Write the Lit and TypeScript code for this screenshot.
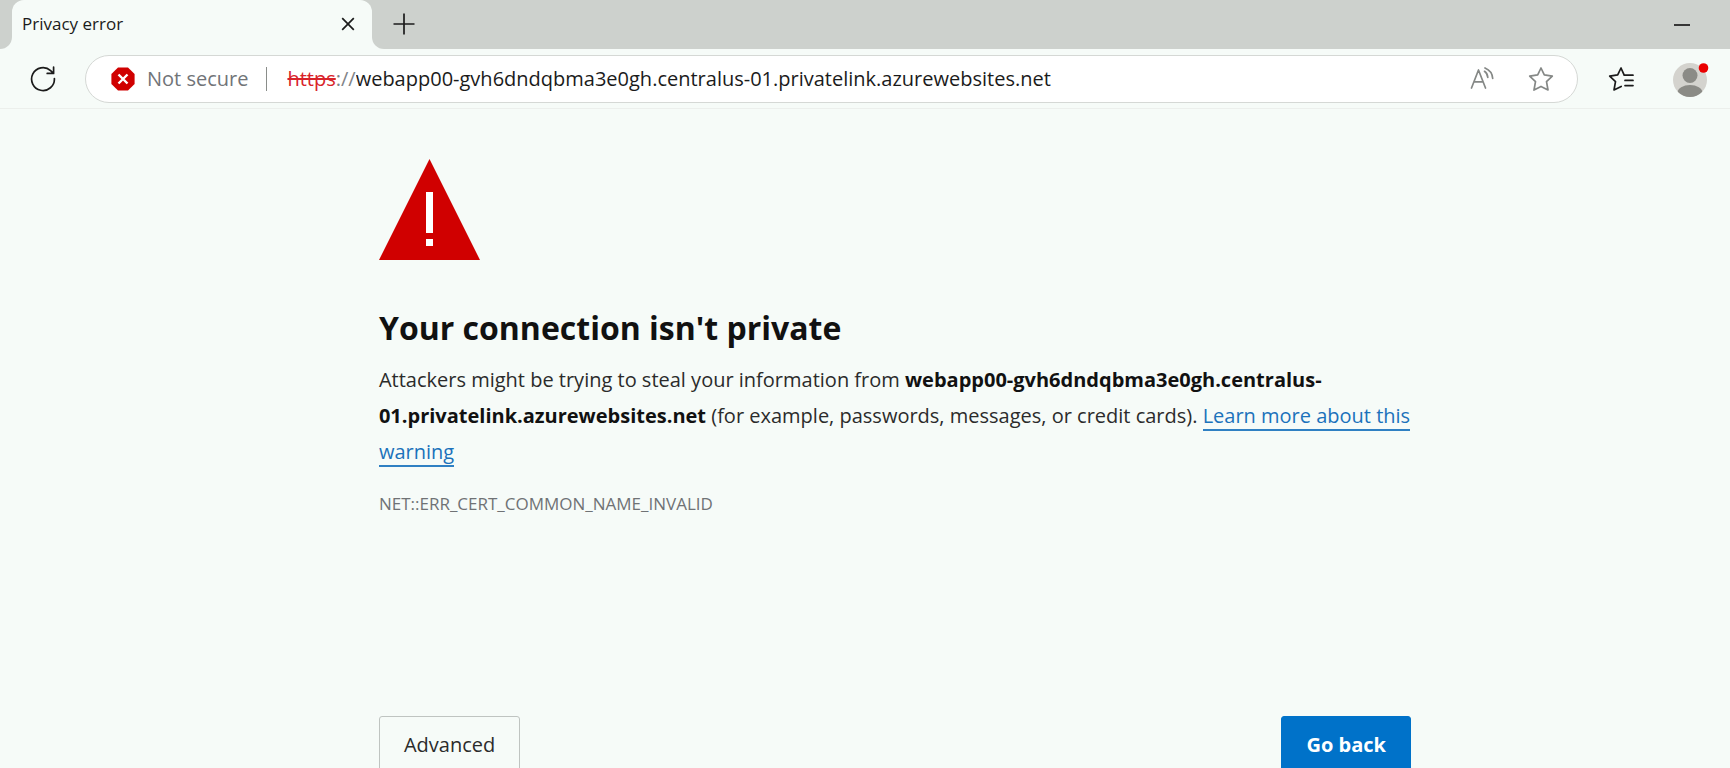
import { LitElement, html, css } from "lit";
import { customElement } from "lit/decorators.js";

const HOST = "webapp00-gvh6dndqbma3e0gh.centralus-01.privatelink.azurewebsites.net";

@customElement("browser-tabs")
class BrowserTabs extends LitElement {
  static styles = css`
    :host {
      display: flex;
      align-items: center;
      height: 49px;
      background: #cdd1cd;
      color: #1b1b1b;
    }
    .edge {
      width: 12px;
      align-self: stretch;
      background: #f6fbf8;
    }
    .edge span {
      display: block;
      height: 100%;
      background: #cdd1cd;
    }
    .edge.left span {
      border-bottom-right-radius: 12px;
    }
    .edge.right span {
      border-bottom-left-radius: 12px;
    }
    .tab {
      display: flex;
      align-items: center;
      justify-content: space-between;
      align-self: stretch;
      width: 360px;
      box-sizing: border-box;
      padding: 0 12px 2px 10px;
      border-radius: 12px 12px 0 0;
      background: #f6fbf8;
      font-size: 17px;
      line-height: 24px;
    }
    button {
      display: grid;
      place-items: center;
      width: 24px;
      height: 24px;
      padding: 0;
      border: 0;
      background: none;
      color: inherit;
    }
    .add {
      width: 40px;
      height: 40px;
      padding-bottom: 2px;
    }
    .minimize {
      margin-left: auto;
      margin-right: 36px;
    }
    svg {
      display: block;
      fill: none;
      stroke: currentColor;
      stroke-width: 1.7;
    }
  `;

  render() {
    return html`
      <div class="edge left"><span></span></div>
      <div class="tab">
        <span>Privacy error</span>
        <button aria-label="Close tab">
          <svg width="14" height="14" viewBox="0 0 14 14"><path d="M1.2 1.2l11.6 11.6M12.8 1.2l-11.6 11.6" /></svg>
        </button>
      </div>
      <div class="edge right"><span></span></div>
      <button class="add" aria-label="New tab">
        <svg width="22" height="22" viewBox="0 0 22 22"><path d="M11 .5v21M.5 11h21" /></svg>
      </button>
      <button class="minimize" aria-label="Minimize">
        <svg width="16" height="4" viewBox="0 0 16 4"><path d="M0 2h16" /></svg>
      </button>
    `;
  }
}

@customElement("browser-toolbar")
class BrowserToolbar extends LitElement {
  static styles = css`
    :host {
      display: flex;
      align-items: center;
      height: 60px;
      box-sizing: border-box;
      padding: 1px 22px 0 28px;
      border-bottom: 1px solid #ecefec;
      background: #f6fbf8;
      color: #1b1b1b;
    }
    button {
      display: grid;
      place-items: center;
      width: 30px;
      height: 34px;
      padding: 0;
      border: 0;
      background: none;
      color: inherit;
      font: inherit;
    }
    svg {
      display: block;
      fill: none;
      stroke: currentColor;
      stroke-width: 1.7;
      stroke-linejoin: round;
      stroke-linecap: round;
    }
    .address {
      flex: 1;
      display: flex;
      align-items: center;
      height: 48px;
      box-sizing: border-box;
      margin: 0 28px 0 27px;
      padding: 0 21px 0 25px;
      border: 1px solid #d5d8d5;
      border-radius: 24px;
      background: #fff;
      font-size: 20px;
      line-height: 28px;
    }
    .security {
      display: flex;
      width: auto;
      gap: 12px;
      align-items: center;
      color: #717478;
    }
    .divider {
      width: 1px;
      height: 24px;
      margin: 0 20px 0 18px;
      background: #8a8d8a;
    }
    label {
      display: flex;
      flex: 1;
      min-width: 0;
    }
    .scheme {
      color: #d8232a;
      text-decoration: line-through;
      text-decoration-thickness: 2px;
    }
    .slashes {
      color: #818488;
    }
    input {
      flex: 1;
      min-width: 0;
      padding: 0;
      border: 0;
      outline: 0;
      background: none;
      color: #1b1b1b;
      font: inherit;
    }
    .tools {
      display: flex;
      gap: 29px;
      color: #858886;
    }
    .side {
      display: flex;
      gap: 36px;
    }
    .avatar {
      width: 36px;
    }
  `;

  render() {
    return html`
      <button aria-label="Reload">
        <svg width="26" height="26" viewBox="0 0 26 26">
          <path d="M24.4 12.5A11.4 11.4 0 1 1 20.6 4.6L23.6 7.4M23.6 1.2V7.4H17.2" />
        </svg>
      </button>
      <div class="address">
        <button class="security">
          <svg width="24" height="24" viewBox="0 0 24 24">
            <path fill="#d00000" stroke="none" d="M7 .4H17L23.6 7V17L17 23.6H7L.4 17V7Z" />
            <path stroke="#fff" stroke-width="2.4" stroke-linecap="butt" d="M7.5 7.5l9 9M16.5 7.5l-9 9" />
          </svg>
          <span>Not secure</span>
        </button>
        <span class="divider"></span>
        <label>
          <span class="scheme">https</span><span class="slashes">://</span>
          <input type="text" aria-label="Address" .value=${HOST} />
        </label>
        <div class="tools">
          <button aria-label="Read aloud">
            <svg width="24" height="24" viewBox="0 0 24 24">
              <path d="M1.5 21L8.5 3L15.5 21M4 14.8H13M14.5 4.3C16.6 5.8 17.6 7.7 17.8 10.4M15 1C19.8 3 22.4 6.5 22.7 11.5" />
            </svg>
          </button>
          <button aria-label="Add to favorites">
            <svg width="26" height="26" viewBox="0 0 26 26">
              <path d="M13 2L16.3 8.9L24.3 10.1L18.5 15.7L20 24L13 20.4L6 24L7.5 15.7L1.7 10.1L9.7 8.9Z" />
            </svg>
          </button>
        </div>
      </div>
      <div class="side">
        <button aria-label="Favorites">
          <svg width="26" height="26" viewBox="0 0 26 26">
            <path d="M16.2 9.2L13 2L9.7 8.9L1.7 10.1L7.5 15.7L6 24L13.2 20.4M16.2 9.2H25M17 14.4H25M17 19.6H25" />
          </svg>
        </button>
        <button class="avatar" aria-label="Profile">
          <svg width="36" height="36" viewBox="0 0 36 36" overflow="visible">
            <defs><clipPath id="disc"><circle cx="18" cy="18" r="17" /></clipPath></defs>
            <g stroke="none">
              <circle cx="18" cy="18" r="17" fill="#d4d3ce" />
              <circle cx="18" cy="13.5" r="7.5" fill="#8b8b86" />
              <ellipse cx="18" cy="31" rx="12.5" ry="8" fill="#8b8b86" clip-path="url(#disc)" />
              <circle cx="31.5" cy="6" r="4.8" fill="#ea0000" />
            </g>
          </svg>
        </button>
      </div>
    `;
  }
}

@customElement("app-root")
class AppRoot extends LitElement {
  static styles = css`
    :host {
      display: flex;
      flex-direction: column;
      height: 100vh;
      background: #f6fbf8;
      color: #2b2b2b;
      font-family: "Open Sans", "Noto Sans", sans-serif;
    }
    browser-tabs,
    browser-toolbar {
      flex: none;
    }
    main {
      flex: 1;
      min-height: 0;
      overflow: auto;
      scrollbar-width: none;
      display: grid;
      grid-template-columns: 19fr minmax(0, 1032px) 16fr;
      align-content: start;
    }
    .warning {
      grid-column: 2;
      padding: 50px 0 48px;
    }
    .triangle {
      display: block;
      width: 101px;
      height: 101px;
    }
    h1 {
      margin: 44px 0 0;
      color: #111;
      font-size: 32px;
      line-height: 48px;
      font-weight: 700;
    }
    p {
      margin: 10px 0 0;
      font-size: 20px;
      line-height: 36px;
    }
    strong {
      color: #111;
      font-weight: 700;
    }
    a {
      color: #1b72bb;
      text-decoration: none;
      border-bottom: 2px solid #2f80c3;
    }
    .code {
      margin-top: 16px;
      color: #6f7275;
      font-size: 17px;
    }
    .actions {
      display: flex;
      justify-content: space-between;
      margin-top: 194px;
    }
    .actions button {
      height: 58px;
      padding: 0 24px;
      border: 1px solid #bfc4c1;
      border-radius: 3px;
      background: none;
      color: #2b2b2b;
      font-family: inherit;
      font-size: 20px;
      line-height: 28px;
    }
    .actions .primary {
      border-color: #0072c9;
      background: #0072c9;
      color: #fff;
      font-weight: 700;
    }
  `;

  render() {
    return html`
      <browser-tabs></browser-tabs>
      <browser-toolbar></browser-toolbar>
      <main>
        <section class="warning">
          <svg class="triangle" viewBox="0 0 101 101" role="img" aria-label="Warning">
            <path fill="#d00000" d="M50.5 0L101 101H0Z" />
            <path fill="#fff" d="M47 33h7v41h-7ZM47 80h7v7h-7Z" />
          </svg>
          <h1>Your connection isn't private</h1>
          <p>
            Attackers might be trying to steal your information from <strong>${HOST}</strong> (for example, passwords,
            messages, or credit cards). <a href="#">Learn more about this warning</a>
          </p>
          <p class="code">NET::ERR_CERT_COMMON_NAME_INVALID</p>
          <div class="actions">
            <button>Advanced</button>
            <button class="primary">Go back</button>
          </div>
        </section>
      </main>
    `;
  }
}
